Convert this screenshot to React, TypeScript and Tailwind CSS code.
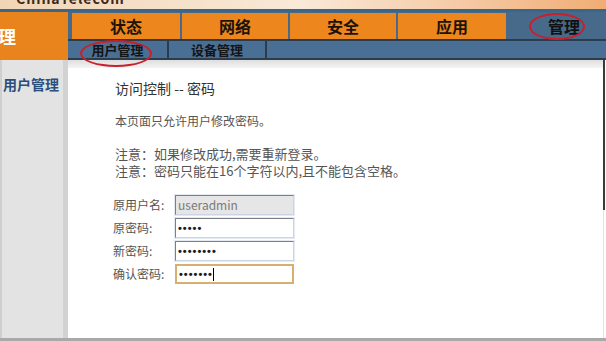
import React from 'react';

const font = "font-['Noto_Sans_CJK_SC','Noto_Sans',sans-serif]";

const tabs = [
  { label: '状态', w: 'w-[108px]' },
  { label: '网络', w: 'w-[106px]' },
  { label: '安全', w: 'w-[106px]' },
  { label: '应用', w: 'w-[108px]' },
];

function Field({ label, children, focus, disabled }: { label: string; children: React.ReactNode; focus?: boolean; disabled?: boolean }) {
  const frame = focus
    ? 'border-2 border-[#d6b06c]'
    : 'border border-t-[#7d7f86] border-l-[#7d7f86] border-r-[#cbd3e4] border-b-[#cbd3e4] outline outline-1 outline-[#e4e9f3]';
  return (
    <div className="flex items-center h-[20px]">
      <label className="w-[62px] text-[12px] leading-[20px] text-[#555]">{label}</label>
      <div className={`w-[119px] h-[20px] flex items-center pl-[2px] ${frame} ${disabled ? 'bg-[#e6e6e6]' : 'bg-white'}`}>
        {children}
      </div>
    </div>
  );
}

function Dots({ n, caret }: { n: number; caret?: boolean }) {
  return (
    <span className="flex items-center font-['Liberation_Sans',sans-serif] text-[11px] leading-[12px] tracking-[1px] text-[#1c1c1c] font-bold">
      {'•'.repeat(n)}
      {caret && <span className="w-[1px] h-[13px] bg-black" />}
    </span>
  );
}

export default function App() {
  return (
    <div className={`relative w-[606px] h-[341px] overflow-hidden bg-white ${font}`}>
      {/* brand strip */}
      <div className="h-[9px] overflow-hidden bg-gradient-to-r from-[#f1d5b6] via-[#f9e9d8] to-[#f0ad74] pl-[16px]">
        <div className="-mt-[9px] text-[14px] leading-[15px] font-bold tracking-[1px] text-[#3a2a1e]">ChinaTelecom</div>
      </div>
      <div className="h-[3px] bg-[#3c6687]" />

      {/* nav */}
      <div className="flex h-[48px]">
        <div className="w-[68px] bg-[#e9831c] overflow-hidden flex items-center">
          <span className="-ml-[20px] text-[18px] leading-[20px] font-bold text-white whitespace-nowrap">管理</span>
        </div>
        <div className="flex-1 flex flex-col bg-[#47698a]">
          <div className="flex h-[29px] gap-[2px] pl-[4px] pt-[1px] border-b-2 border-[#2b3d4d]">
            {tabs.map((t) => (
              <div key={t.label} className={`${t.w} bg-[#ec861d] flex items-center justify-center text-[16px] font-bold text-[#1b130a]`}>
                {t.label}
              </div>
            ))}
            <div className="flex-1 flex items-center pl-[40px] text-[16px] font-bold text-[#111]">管理</div>
          </div>
          <div className="flex h-[19px] gap-[2px] bg-[#2b3d4d] border-b-2 border-[#2b3d4d]">
            <div className="w-[99px] bg-[#4a6f94] flex items-center justify-center text-[13px] font-bold text-[#141414]">用户管理</div>
            <div className="w-[96px] bg-[#4a6f94] flex items-center justify-center text-[13px] font-bold text-[#141414]">设备管理</div>
            <div className="flex-1 bg-[#4a6f94]" />
          </div>
        </div>
      </div>

      {/* body */}
      <div className="flex h-[278px]">
        <div className="w-[68px] bg-[#e3e3e3] border-l-2 border-[#cfcfcf] border-r-[5px] border-r-[#d2d2d2] pt-[15px] pl-[1px]">
          <div className="text-[14px] leading-[18px] font-bold text-[#2b4f7d] whitespace-nowrap">用户管理</div>
        </div>
        <div className="flex-1 flex">
          <div className="flex-1 flex flex-col">
            <div className="h-[8px] bg-gradient-to-b from-[#dedede] to-[#f4f4f4]" />
            <div className="pl-[47px] pt-[11px]">
              <div className="text-[14px] leading-[18px] text-[#333]">访问控制 -- 密码</div>
              <div className="mt-[16px] text-[12px] leading-[16px] text-[#555]">本页面只允许用户修改密码。</div>
              <div className="mt-[16px] text-[13px] leading-[17px] text-[#555]">
                <div>注意：如果修改成功,需要重新登录。</div>
                <div>注意：密码只能在16个字符以内,且不能包含空格。</div>
              </div>
              <div className="mt-[16px] -ml-[2px] flex flex-col gap-[3px]">
                <Field label="原用户名:" disabled>
                  <span className="text-[12px] leading-[14px] text-[#7a7a7a]">useradmin</span>
                </Field>
                <Field label="原密码:">
                  <Dots n={5} />
                </Field>
                <Field label="新密码:">
                  <Dots n={8} />
                </Field>
                <Field label="确认密码:" focus>
                  <Dots n={7} caret />
                </Field>
              </div>
            </div>
          </div>
          <div className="w-[3px] flex flex-col">
            <div className="h-[150px] w-[2px] bg-[#3a3a3a]" />
            <div className="flex-1 border-l border-[#e2e2e2]" />
          </div>
        </div>
      </div>
      <div className="h-[3px] bg-[#a9a9a9]" />

      {/* red circle marks */}
      <div className="absolute left-[529px] top-[13px] w-[56px] h-[27px] rounded-[50%] border-2 border-[#c9202b]" />
      <div className="absolute left-[80px] top-[40px] w-[72px] h-[27px] rounded-[50%] border-2 border-[#c9202b]" />
    </div>
  );
}
